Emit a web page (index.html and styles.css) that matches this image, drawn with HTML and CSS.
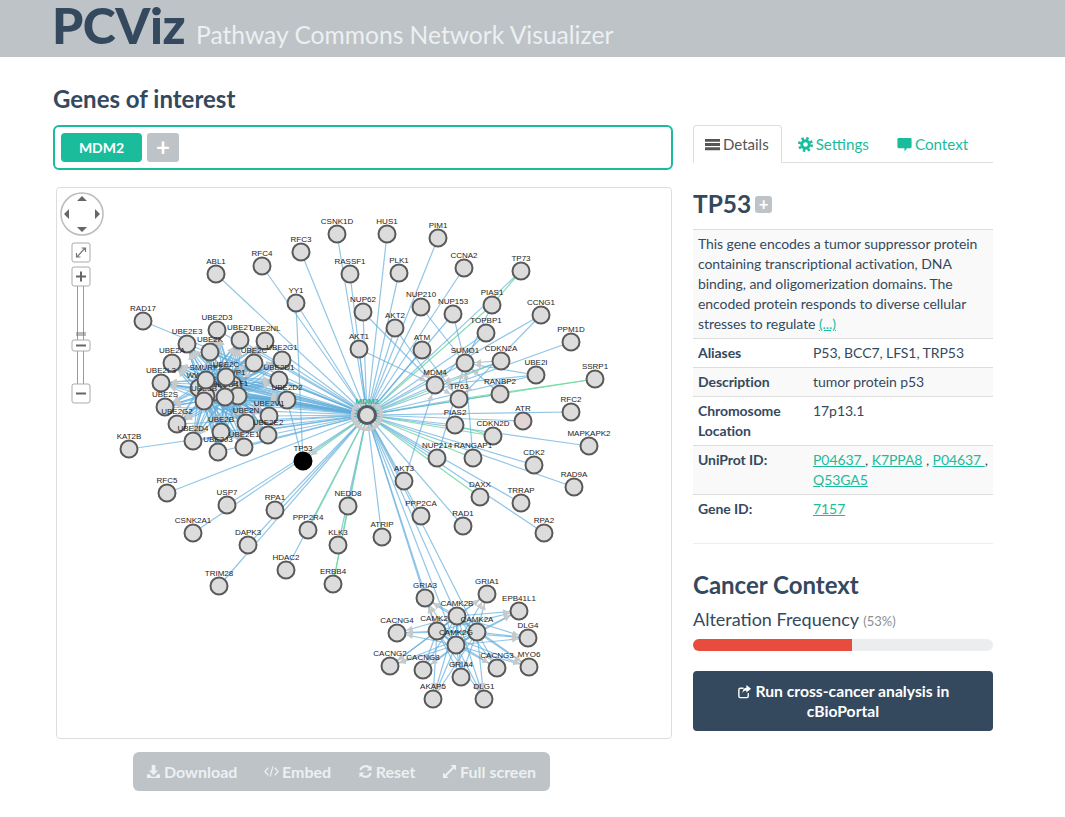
FILE: index.html
```html
<!DOCTYPE html>
<html lang="en">

<head>
  <meta charset="UTF-8" />
  <title>PCViz - Pathway Commons Network Visualizer</title>
  <link rel="stylesheet" href="styles.css">
</head>

<body>

  <header class="topbar">
    <span class="brand">PCViz</span>
    <span class="tagline">Pathway Commons Network Visualizer</span>
  </header>

  <main class="page">
    <section class="left-col">
      <h2 class="genes-title">Genes of interest</h2>
      <div class="gene-box">
        <span class="gene-tag">MDM2</span>
        <span class="gene-add">+</span>
      </div>

      <div class="canvas-box">
        <svg id="network" class="network" viewBox="57 188 614 550" width="614" height="550"></svg>

        <!-- pan / zoom control sits on top of the graph -->
        <svg class="panzoom" viewBox="0 0 50 220" width="50" height="220">
          <circle class="pz-wheel" cx="25" cy="25" r="21" />
          <path class="pz-arrow" d="M25 7l5 5h-10zM25 43l5-5h-10zM7 25l5-5v10zM43 25l-5-5v10z" />
          <rect class="pz-btn" x="15" y="54" width="18" height="19" rx="2" />
          <path class="pz-glyph-thin" d="M20 68l8-9M24.500 59h4v4M19.500 64v4h4" />
          <rect class="pz-track" x="20.500" y="96" width="6" height="100" />
          <rect class="pz-btn" x="15" y="78" width="18" height="19" rx="2" />
          <path class="pz-glyph" d="M19 87.500h10M24 82.500v10" />
          <path class="pz-notch" d="M19 144h10M19 146h10" />
          <rect class="pz-btn" x="15" y="151" width="18" height="11" rx="2" />
          <path class="pz-glyph" d="M19 156.500h10" />
          <rect class="pz-btn" x="15" y="195" width="18" height="19" rx="2" />
          <path class="pz-glyph" d="M19 204.500h10" />
        </svg>
      </div>

      <div class="toolbar">
        <a class="tool">
          <svg class="ico" viewBox="0 0 16 16"><path d="M6 1h4v6h3l-5 5-5-5h3zM1 11h3l2 2.500h4l2-2.500h3v4H1z" /></svg>
          Download
        </a>
        <a class="tool">
          <svg class="ico ico-line" viewBox="0 0 16 16"><path d="M4.500 4L1 8l3.500 4M11.500 4L15 8l-3.500 4M9.500 2.500l-3 11" /></svg>
          Embed
        </a>
        <a class="tool">
          <svg class="ico ico-line ico-thick" viewBox="0 0 16 16"><path d="M2.500 6.500A5.800 5.800 0 0 1 13 5M13.500 9.500A5.800 5.800 0 0 1 3 11" /><path class="ico-fill" d="M14.500 1.500V7H9zM1.500 14.500V9H7z" /></svg>
          Reset
        </a>
        <a class="tool">
          <svg class="ico ico-line ico-thick" viewBox="0 0 16 16"><path d="M3 13L13 3" /><path class="ico-fill" d="M9 1h6v6zM1 9v6h6z" /></svg>
          Full screen
        </a>
      </div>
    </section>

    <aside class="right-col">
      <ul class="tabs">
        <li class="tab active">
          <svg class="ico" viewBox="0 0 16 16"><path d="M0 2h16v3H0zM0 6.500h16v3H0zM0 11h16v3H0z" /></svg>
          Details
        </li>
        <li class="tab">
          <svg class="ico" viewBox="0 0 16 16"><circle class="cog-teeth" cx="8" cy="8" r="6.500" /><circle class="cog-ring" cx="8" cy="8" r="4" /></svg>
          Settings
        </li>
        <li class="tab">
          <svg class="ico" viewBox="0 0 18 16" preserveAspectRatio="none"><path d="M2 1h14a1.500 1.500 0 0 1 1.500 1.500v8A1.500 1.500 0 0 1 16 12h-4l-3 3.500V12H2a1.500 1.500 0 0 1-1.500-1.500v-8A1.500 1.500 0 0 1 2 1z" /></svg>
          Context
        </li>
      </ul>

      <h3 class="gene-name">TP53 <span class="gene-name-add">+</span></h3>

      <table class="info">
        <colgroup>
          <col class="info-key">
          <col>
        </colgroup>
        <tr class="odd">
          <td colspan="2">This gene encodes a tumor suppressor protein containing transcriptional activation, DNA binding, and oligomerization domains. The encoded protein responds to diverse cellular stresses to regulate <a href="#">(...)</a></td>
        </tr>
        <tr>
          <th>Aliases</th>
          <td>P53, BCC7, LFS1, TRP53</td>
        </tr>
        <tr class="odd">
          <th>Description</th>
          <td>tumor protein p53</td>
        </tr>
        <tr>
          <th>Chromosome Location</th>
          <td>17p13.1</td>
        </tr>
        <tr class="odd">
          <th>UniProt ID:</th>
          <td><a href="#">P04637 </a>, <a href="#">K7PPA8</a> , <a href="#">P04637 </a>, <a href="#">Q53GA5</a></td>
        </tr>
        <tr>
          <th>Gene ID:</th>
          <td><a href="#">7157</a></td>
        </tr>
      </table>

      <hr class="divider">

      <h3 class="context-title">Cancer Context</h3>
      <p class="freq">Alteration Frequency <small>(53%)</small></p>
      <div class="progress">
        <div class="progress-bar" style="width: 53%"></div>
      </div>
      <a class="run-btn">
        <svg class="ico-share" viewBox="0 0 16 16"><path d="M12 9.500V13a1.500 1.500 0 0 1-1.500 1.500h-7A1.500 1.500 0 0 1 2 13V6a1.500 1.500 0 0 1 1.500-1.500H7" /><path class="ico-fill" d="M10 1l5 4-5 4V6.800C8 6.800 6.500 7.500 6 10c-.3-3.500 1-5.700 4-6z" /></svg>
        Run cross-cancer analysis in cBioPortal
      </a>
    </aside>
  </main>

  <script src="network.js"></script>

</body>

</html>
```

FILE: styles.css
```css
/* ─── BASE ───────────────────────────────────────────────────────── */
* {
  box-sizing: border-box;
}

html,
body {
  margin: 0;
  height: 817px;
  overflow: hidden;
  background: #fff;
  color: #34495e;
  font-family: Lato, "Open Sans", sans-serif;
  font-size: 14px;
  line-height: 20px;
}

a {
  color: #1abc9c;
}

/* ─── HEADER ─────────────────────────────────────────────────────── */
.topbar {
  display: flex;
  align-items: baseline;
  height: 57px;
  padding: 3px 0 0 52px;
  background: #bdc3c7;
}

.brand {
  font-size: 50px;
  font-weight: 900;
  line-height: 44px;
  letter-spacing: -0.5px;
  color: #34495e;
}

.tagline {
  margin-left: 11px;
  font-size: 24.600px;
  line-height: 30px;
  color: #ecf0f1;
}

/* ─── COLUMNS ────────────────────────────────────────────────────── */
.page {
  display: flex;
  gap: 20px;
  padding-left: 53px;
}

.left-col {
  width: 620px;
}

.right-col {
  width: 300px;
  padding-top: 68px;
}

/* ─── GENE INPUT ─────────────────────────────────────────────────── */
.genes-title {
  margin: 28px 0 12px;
  font-size: 24px;
  font-weight: 700;
  line-height: 28px;
}

.gene-box {
  display: flex;
  gap: 5px;
  height: 45px;
  padding: 6px;
  border: 2px solid #1abc9c;
  border-radius: 6px;
}

.gene-tag {
  width: 81px;
  height: 29px;
  border-radius: 4px;
  background: #1abc9c;
  color: #fff;
  font-size: 14px;
  font-weight: 700;
  line-height: 29px;
  text-align: center;
}

.gene-add {
  width: 32px;
  height: 29px;
  border-radius: 3px;
  background: #bdc3c7;
  color: #fff;
  font-size: 24px;
  font-weight: 700;
  line-height: 28px;
  text-align: center;
}

/* ─── NETWORK CANVAS ─────────────────────────────────────────────── */
.canvas-box {
  position: relative;
  width: 616px;
  height: 552px;
  margin: 17px 0 0 3px;
  border: 1px solid #ddd;
  border-radius: 4px;
}

.network {
  display: block;
}

.edge {
  fill: none;
  stroke: #62aedb;
  stroke-width: 1.200;
  stroke-opacity: 0.7;
}

.edge-green {
  stroke: #6fd9a0;
  stroke-opacity: 0.85;
}

.arrow {
  fill: #c9c9c9;
}

.node {
  fill: #dcdcdc;
  stroke: #595959;
  stroke-width: 2;
}

.node-label {
  fill: #222;
  font-family: "Liberation Sans", Arial, sans-serif;
  font-size: 8px;
  text-anchor: middle;
}

.node-hub {
  stroke-width: 3;
}

.node-label-hub {
  fill: #1abc9c;
  font-weight: 700;
}

.node-selected {
  fill: #000;
  stroke: #000;
}

/* pan and zoom widget */
.panzoom {
  position: absolute;
  top: 1px;
  left: 0;
}

.pz-wheel {
  fill: #fff;
  stroke: #bbb;
  stroke-width: 1.500;
}

.pz-arrow {
  fill: #666;
}

.pz-btn {
  fill: #fff;
  stroke: #aaa;
}

.pz-track {
  fill: #fff;
  stroke: #999;
}

.pz-glyph {
  fill: none;
  stroke: #666;
  stroke-width: 2;
}

.pz-glyph-thin {
  fill: none;
  stroke: #777;
  stroke-width: 1.200;
}

.pz-notch {
  fill: none;
  stroke: #777;
  stroke-width: 1;
}

/* ─── TOOLBAR ────────────────────────────────────────────────────── */
.toolbar {
  display: flex;
  align-items: center;
  justify-content: space-between;
  width: 417px;
  height: 39px;
  margin: 13px 0 0 80px;
  padding: 0 14px 0 13px;
  border-radius: 6px;
  background: #bdc3c7;
}

.tool {
  display: flex;
  align-items: center;
  gap: 3px;
  color: #ecf0f1;
  font-size: 16px;
  font-weight: 700;
}

/* ─── ICONS ──────────────────────────────────────────────────────── */
.ico {
  width: 15px;
  height: 15px;
  flex: none;
  fill: currentColor;
}

.ico-line {
  fill: none;
  stroke: currentColor;
  stroke-width: 1.300;
}

.ico-thick {
  stroke-width: 2.200;
}

.ico-fill {
  fill: currentColor;
  stroke: none;
}

.cog-teeth {
  fill: none;
  stroke: currentColor;
  stroke-width: 3;
  stroke-dasharray: 2.600 2.500;
}

.cog-ring {
  fill: none;
  stroke: currentColor;
  stroke-width: 3;
}

.ico-share {
  display: inline-block;
  width: 15px;
  height: 15px;
  vertical-align: -2px;
  fill: none;
  stroke: currentColor;
  stroke-width: 1.500;
}

/* ─── TABS ───────────────────────────────────────────────────────── */
.tabs {
  display: flex;
  margin: 0;
  padding: 0;
  height: 38px;
  border-bottom: 1px solid #ddd;
  list-style: none;
}

.tab {
  display: flex;
  align-items: center;
  gap: 3px;
  height: 38px;
  padding: 0 12px 0 16px;
  color: #1abc9c;
  font-size: 15.200px;
}

.tab.active {
  padding: 0 12px 0 11px;
  border: 1px solid #ddd;
  border-bottom-color: #fff;
  border-radius: 4px 4px 0 0;
  color: #555;
  font-size: 15px;
}

/* ─── GENE DETAILS ───────────────────────────────────────────────── */
.gene-name {
  display: flex;
  align-items: center;
  gap: 4px;
  margin: 26px 0 10px;
  font-size: 24.500px;
  font-weight: 700;
  line-height: 30px;
}

.gene-name-add {
  width: 17px;
  height: 17px;
  border-radius: 3px;
  background: #bdc3c7;
  color: #fff;
  font-size: 17px;
  line-height: 16px;
  text-align: center;
}

.info {
  width: 300px;
  table-layout: fixed;
  border-collapse: collapse;
  border-top: 1px solid #ddd;
  letter-spacing: -0.07px;
}

.info-key {
  width: 115px;
}

.info tr {
  border-bottom: 1px solid #ddd;
}

.info tr:last-child {
  border-bottom: 0;
}

.info .odd {
  background: #f9f9f9;
}

.info th,
.info td {
  padding: 4px 5px;
  text-align: left;
  vertical-align: top;
}

.info th {
  font-weight: 700;
}

.divider {
  height: 1px;
  margin: 20px 0 25px;
  border: 0;
  background: #eee;
}

/* ─── CANCER CONTEXT ─────────────────────────────────────────────── */
.context-title {
  margin: 0 0 6px;
  font-size: 24px;
  font-weight: 700;
  line-height: 32px;
}

.freq {
  margin: 0 0 6px;
  font-size: 18px;
  line-height: 24px;
}

.freq small {
  color: #8a8f94;
  font-size: 13px;
}

.progress {
  height: 12px;
  overflow: hidden;
  border-radius: 6px;
  background: #ebedef;
}

.progress-bar {
  height: 100%;
  background: #e74c3c;
}

.run-btn {
  display: block;
  height: 60px;
  margin-top: 20px;
  padding: 10px 30px 0;
  border-radius: 4px;
  background: #34495e;
  color: #fff;
  font-size: 15.700px;
  font-weight: 700;
  text-align: center;
}
```

FILE: network.js
```js
// node positions are page coordinates, the svg viewBox is offset to match
const NODES = {
  CSNK1D: [337, 234], HUS1: [387, 234], PIM1: [438, 238], RFC3: [301, 252], RFC4: [262, 266],
  ABL1: [216, 274], RASSF1: [350, 274], PLK1: [399, 273], CCNA2: [464, 268], TP73: [521, 271],
  YY1: [296, 303], RAD17: [143, 321], NUP62: [363, 312], NUP210: [421, 307], NUP153: [453, 314],
  PIAS1: [492, 305], CCNG1: [541, 315], AKT2: [395, 328], TOPBP1: [486, 333], PPM1D: [571, 342],
  AKT1: [359, 349], ATM: [422, 350], SUMO1: [465, 363], CDKN2A: [501, 361], UBE2I: [536, 375],
  SSRP1: [595, 379], MDM4: [435, 385], TP63: [459, 399], RANBP2: [500, 394], ATR: [523, 421],
  RFC2: [571, 412], PIAS2: [455, 425], CDKN2D: [493, 436], MAPKAPK2: [589, 446], NUP214: [437, 458],
  RANGAP1: [473, 458], CDK2: [534, 465], RAD9A: [574, 487], AKT3: [404, 481], DAXX: [480, 497],
  TRRAP: [521, 503], RPA2: [544, 533], PPP2CA: [421, 516], RAD1: [463, 526], ATRIP: [382, 537],
  NEDD8: [348, 506], KLK3: [338, 545], ERBB4: [333, 584], HDAC2: [286, 570], PPP2R4: [308, 530],
  RPA1: [275, 510], USP7: [227, 505], DAPK3: [248, 545], TRIM28: [219, 586], CSNK2A1: [193, 533],
  RFC5: [167, 493], KAT2B: [129, 449]
};

// the E2 ring around the ubiquitin ligases
const RING = {
  UBE2D3: [217, 330], UBE2T: [240, 340], UBE2NL: [265, 341], UBE2E3: [187, 344], UBE2K: [210, 352],
  UBE2C: [254, 363], UBE2G1: [282, 360], UBE2A: [172, 363], UBE2D1: [279, 380], UBE2L3: [161, 383],
  UBE2D2: [287, 400], UBE2S: [165, 407], UBE2V1: [269, 416], UBE2G2: [177, 424], UBE2N: [246, 423],
  UBE2E2: [268, 435], UBE2D4: [193, 441], UBE2B: [221, 432], UBE2E1: [244, 447], UBE2J3: [218, 452]
};
// the underscore only keeps the key apart from the ring's UBE2C, it is not drawn
const LIGASES = {
  WWP2: [199, 388], UBE3C: [214, 392], WWP1: [233, 385], ITCH: [206, 396], ARF1: [238, 396],
  UBE3B: [204, 401], NEDD4: [225, 397], SMURF2: [206, 380], UBE2C_: [226, 377]
};

const CAM_CORE = { CAMK2D: [437, 631], CAMK2B: [457, 616], CAMK2A: [477, 632], CAMK2G: [456, 645] };
const CAM_OUTER = {
  GRIA3: [425, 598], GRIA1: [487, 594], EPB41L1: [519, 611], CACNG4: [397, 633], DLG4: [528, 638],
  CACNG2: [390, 666], CACNG8: [423, 670], CACNG3: [497, 668], MYO6: [529, 667], GRIA4: [461, 677],
  AKAP5: [433, 699], DLG1: [484, 699]
};

const MDM2 = [367, 415];
const TP53 = [303, 461];

const GREEN_TO_HUB = ['PIAS1', 'SSRP1', 'CDKN2A', 'DAXX', 'PPP2R4', 'ERBB4', 'RANGAP1', 'CDKN2D'];
const PINK = { ATR: '#e2d5d5', ATM: '#dcd9d9', RANBP2: '#dcd8d8', NUP210: '#dcd9d9', UBE3B: '#e2dbdb', GRIA3: '#dcd9d9' };

const all = { ...NODES, ...RING, ...LIGASES, ...CAM_CORE, ...CAM_OUTER, MDM2, TP53 };
const svg = document.getElementById('network');
const NS = 'http://www.w3.org/2000/svg';

function add(tag, attrs, parent) {
  const el = document.createElementNS(NS, tag);
  for (const k in attrs) el.setAttribute(k, attrs[k]);
  (parent || svg).appendChild(el);
  return el;
}

function edge(a, b, green) {
  add('line', {
    class: green ? 'edge edge-green' : 'edge',
    x1: a[0], y1: a[1], x2: b[0], y2: b[1]
  });
}

// small grey triangle just outside the target node
function arrow(from, to) {
  const dx = to[0] - from[0];
  const dy = to[1] - from[1];
  const len = Math.hypot(dx, dy) || 1;
  const ux = dx / len;
  const uy = dy / len;
  const tx = to[0] - ux * 10;
  const ty = to[1] - uy * 10;
  const bx = tx - ux * 6;
  const by = ty - uy * 6;
  const pts = [[tx, ty], [bx - uy * 3, by + ux * 3], [bx + uy * 3, by - ux * 3]];
  add('polygon', { class: 'arrow', points: pts.map(p => p.map(n => n.toFixed(1)).join(',')).join(' ') });
}

// spokes from the hub
Object.keys(NODES).forEach(k => edge(MDM2, NODES[k], GREEN_TO_HUB.includes(k)));
Object.values(RING).forEach(p => edge(MDM2, p));
Object.values(LIGASES).forEach(p => {
  edge(MDM2, p);
  edge(MDM2, [p[0] + 3, p[1] - 3]);
});
Object.values(CAM_CORE).forEach(p => edge(MDM2, p));
edge(MDM2, [425, 598]);
edge(MDM2, TP53, true);
edge(TP53, NODES.YY1);
edge(TP53, RING.UBE2D2);
edge(NODES.TP73, NODES.PIAS1, true);
edge(NODES.TP63, NODES.SSRP1, true);
edge(NODES.ERBB4, NODES.NEDD8, true);

// ligases fan out to the E2 ring
Object.values(LIGASES).forEach(l => {
  Object.values(RING).forEach(r => {
    edge(l, r);
    arrow(l, r);
  });
});

// CaMK2 complex
Object.values(CAM_CORE).forEach(c => {
  Object.values(CAM_OUTER).forEach(o => {
    edge(c, o);
    arrow(c, o);
  });
  Object.values(CAM_CORE).forEach(d => edge(c, d));
});

// regulators around SUMO1 / MDM4 / TP63
[
  ['PIAS1', 'SUMO1'], ['NUP153', 'SUMO1'], ['NUP210', 'SUMO1'], ['CDKN2A', 'SUMO1'], ['UBE2I', 'SUMO1'],
  ['RANBP2', 'SUMO1'], ['RANGAP1', 'SUMO1'], ['TOPBP1', 'MDM4'], ['NUP62', 'MDM4'], ['AKT2', 'MDM4'],
  ['AKT1', 'MDM4'], ['AKT3', 'MDM4'], ['ATM', 'TP63'], ['CDKN2A', 'MDM4'], ['UBE2I', 'MDM4'],
  ['MDM4', 'TP63'], ['NUP214', 'SUMO1'], ['CCNG1', 'TP63']
].forEach(([a, b]) => {
  edge(all[a], all[b]);
  arrow(all[a], all[b]);
});
edge(NODES.PIAS2, NODES.CDKN2D, true);

// arrows into the hub and TP53
for (let i = 0; i < 24; i++) {
  const a = i / 24 * Math.PI * 2;
  arrow([MDM2[0] + Math.cos(a) * 60, MDM2[1] + Math.sin(a) * 60], MDM2);
}
arrow(MDM2, TP53);

function node(name, p, nodeClass, labelClass, offset) {
  const label = add('text', { class: 'node-label ' + (labelClass || ''), x: p[0], y: p[1] - (offset || 10) });
  label.textContent = name.replace('_', '');
  const c = add('circle', { class: 'node ' + (nodeClass || ''), cx: p[0], cy: p[1], r: 8.5 });
  if (PINK[name]) c.style.fill = PINK[name];
}

[NODES, CAM_OUTER, CAM_CORE, RING, LIGASES].forEach(group => {
  Object.keys(group).forEach(k => node(k, group[k]));
});
node('TP53', TP53, 'node-selected');
node('MDM2', MDM2, 'node-hub', 'node-label-hub', 11);
```
